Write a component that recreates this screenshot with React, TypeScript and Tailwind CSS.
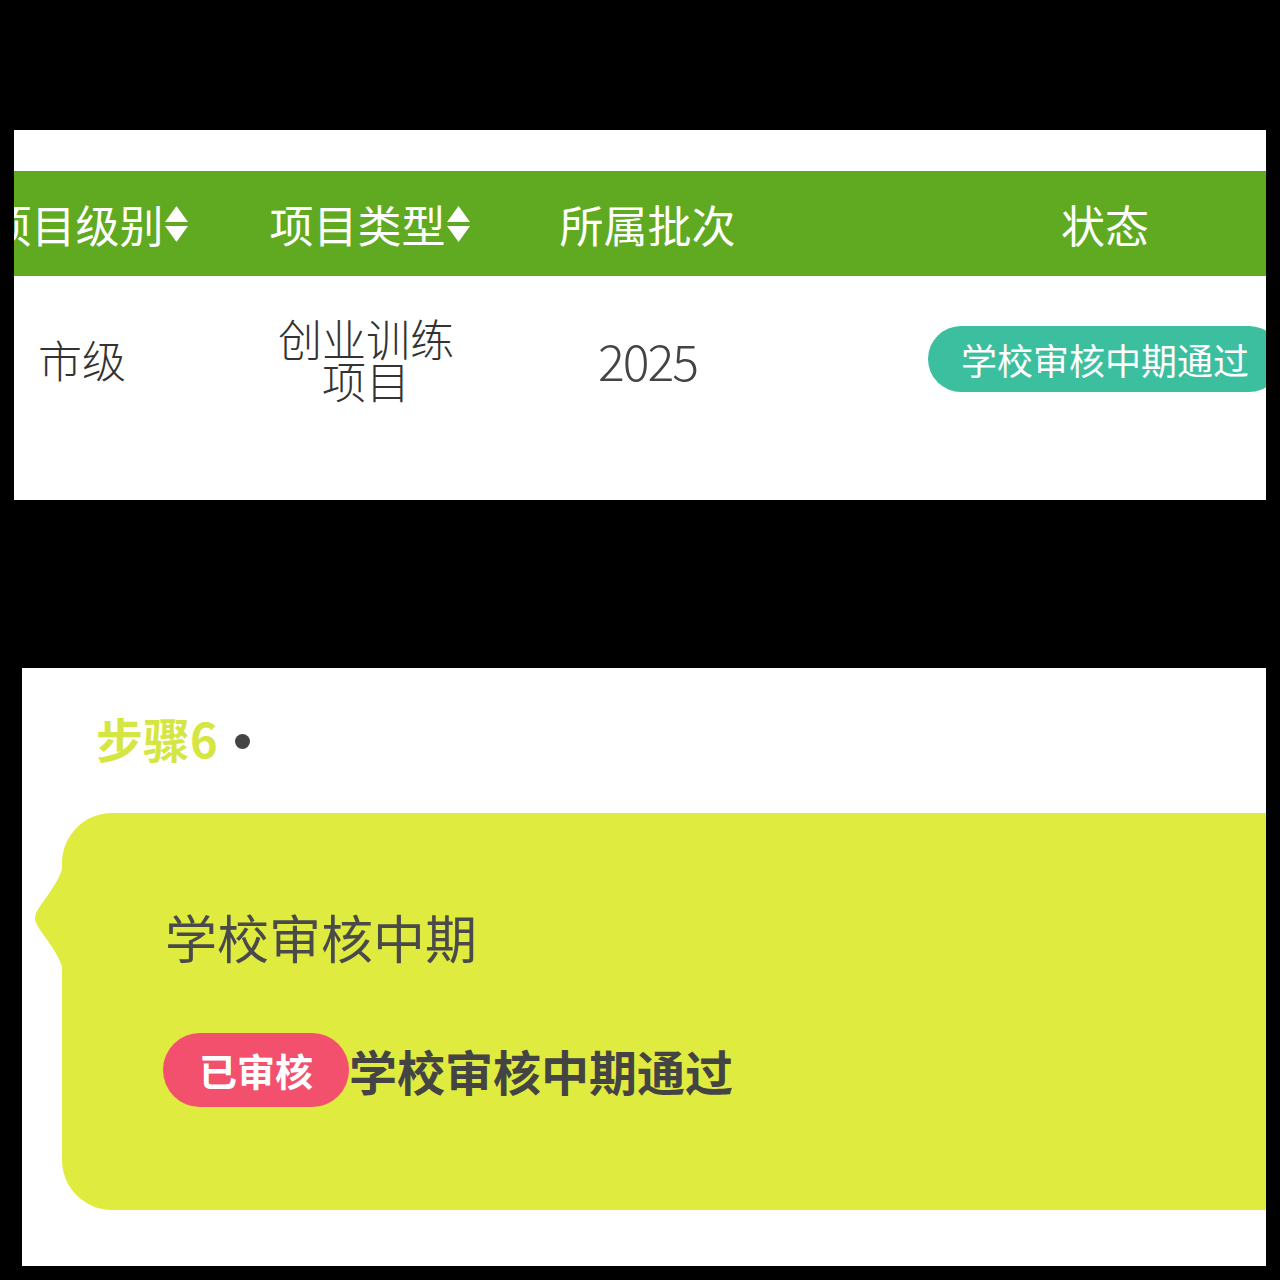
import React from 'react';

const cjk = { fontFamily: '"Noto Sans CJK SC", "Noto Sans", sans-serif' };

const SortIcon = () => (
  <svg width="25" height="38" viewBox="0 0 25 38" className="shrink-0">
    <path d="M12.5 1 L24 17 L1 17 Z" fill="#ffffff" />
    <path d="M1 21 L24 21 L12.5 37 Z" fill="#ffffff" />
  </svg>
);

const columns = [
  { label: '项目级别', sort: true, w: 'w-[284px]' },
  { label: '项目类型', sort: true, w: 'w-[280px]' },
  { label: '所属批次', sort: false, w: 'w-[275px]' },
  { label: '状态', sort: false, w: 'w-[640px]' },
];

export default function App() {
  return (
    <div className="bg-black w-[1280px] h-[1280px] pt-[130px] overflow-hidden" style={cjk}>
      {/* table panel */}
      <div className="ml-[14px] w-[1252px] h-[370px] bg-white pt-[41px] overflow-hidden">
        <div className="ml-[-68px] w-max">
          <div className="flex h-[105px] bg-[#5faa20] text-white text-[44px] leading-none">
            {columns.map((c) => (
              <div key={c.label} className={`${c.w} flex items-center justify-center`}>
                <span className="whitespace-nowrap">{c.label}</span>
                {c.sort && <SortIcon />}
              </div>
            ))}
          </div>
          <div className="flex h-[166px] text-[#333333] leading-none font-light">
            <div className="w-[284px] flex items-center justify-center pr-[12px] text-[44px]">市级</div>
            <div className="w-[280px] flex items-center justify-center pr-[8px]">
              <div className="w-[184px] text-center text-[44px] leading-[42px]">创业训练项目</div>
            </div>
            <div className="w-[275px] flex items-center justify-center text-[50px] tracking-[-2px] text-[#444444]">
              2025
            </div>
            <div className="w-[640px] flex items-center justify-center font-normal">
              <div className="h-[66px] px-[33px] rounded-[33px] bg-[#3bbf9f] text-white text-[36px] flex items-center whitespace-nowrap">
                学校审核中期通过
              </div>
            </div>
          </div>
        </div>
      </div>

      {/* step panel */}
      <div className="mt-[168px] ml-[22px] w-[1244px] h-[598px] bg-white overflow-hidden pt-[34px]">
        <div className="flex items-center ml-[74px] h-[70px]">
          <span className="text-[47px] font-bold text-[#d5e643] leading-none">步骤6</span>
          <span className="ml-[17px] mt-[8px] w-[15px] h-[15px] rounded-full bg-[#444444]" />
        </div>
        <div className="relative ml-[40px] mr-[-60px] mt-[41px] h-[397px] bg-[#e0eb3f] rounded-[50px] pl-[103px] pt-[98px]">
          <svg
            className="absolute left-[-28px] top-[44px]"
            width="30"
            height="122"
            viewBox="0 0 30 122"
          >
            <path
              d="M30 0 C30 14 22 26 14 38 C7 48 1 55 1 61 C1 67 7 74 14 84 C22 96 30 108 30 122 Z"
              fill="#e0eb3f"
            />
          </svg>
          <div className="text-[52px] leading-none text-[#4a4a4a]">学校审核中期</div>
          <div className="flex items-center mt-[70px] ml-[-2px]">
            <span className="h-[74px] px-[36px] rounded-[37px] bg-[#f2506d] text-white text-[38px] font-bold flex items-center leading-none">
              已审核
            </span>
            <span className="text-[48px] font-bold text-[#444444] leading-none">学校审核中期通过</span>
          </div>
        </div>
      </div>
    </div>
  );
}
